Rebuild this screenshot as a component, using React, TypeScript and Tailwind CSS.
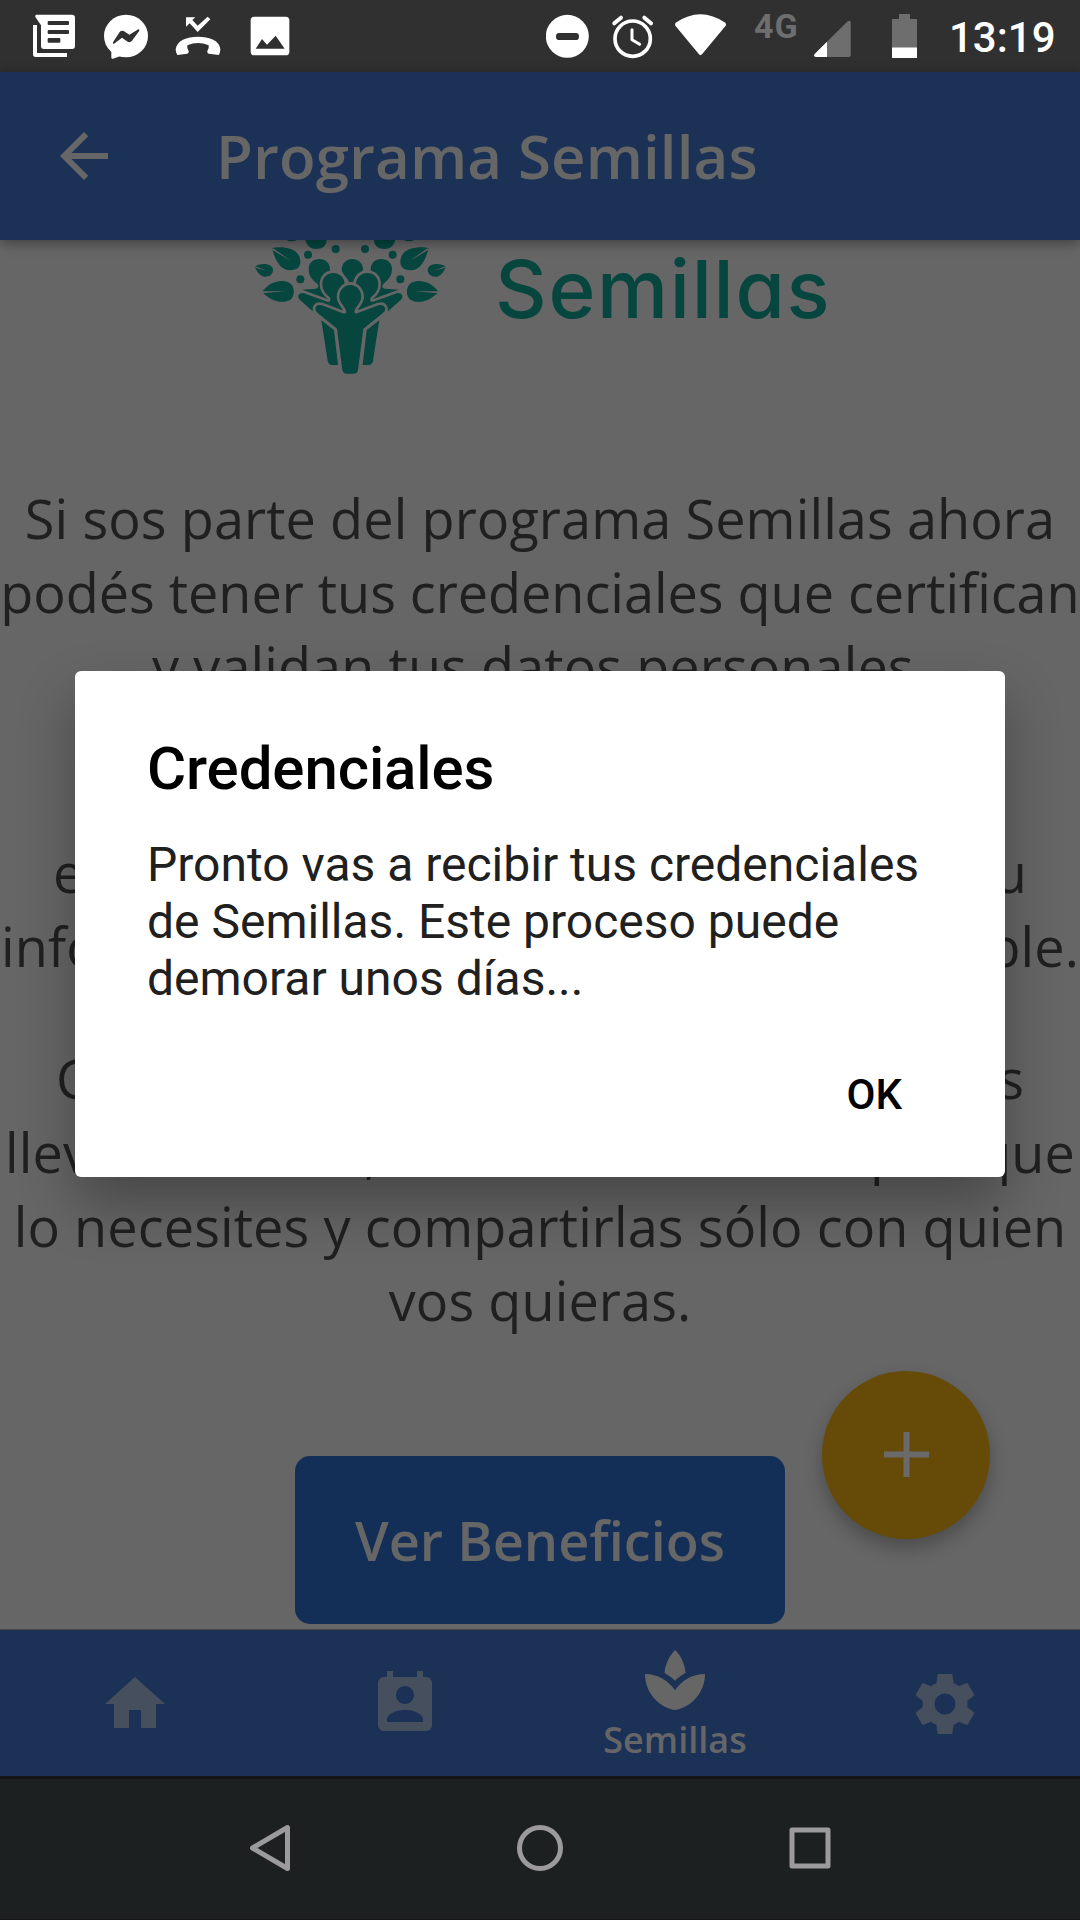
import type { ReactNode } from "react";

function StatusBar() {
  return (
    <div className="flex h-[72px] shrink-0 items-start bg-[#303030] pt-3 pl-8 text-white">
      <svg className="h-12 w-11" viewBox="36 36 132 144" fill="currentColor">
        <path d="M39 75h12v84h90v12H47q-8 0-8-8z" />
        <path d="M49 44H156q9 0 9 9V138q0 9-9 9H72q-9 0-9-9V76L46 51q-2-6 3-7z" />
        <g fill="#303030">
          <rect x="83" y="63" width="64" height="12" rx="3" />
          <rect x="83" y="90" width="64" height="12" rx="3" />
          <rect x="83" y="114" width="38" height="14" rx="3" />
        </g>
      </svg>
      <svg className="ml-[26px] size-12" viewBox="246 36 144 144" fill="currentColor">
        <ellipse cx="318" cy="108" rx="66" ry="64" />
        <path d="M274 140V173q1 4 5 3L308 166z" />
        <path
          fill="#303030"
          d="M279 131q-1-3 1-6L299 96q5-6 12-3L328 104 355 88q4 0 3 4L336 122q-6 7-13 3L306 113 282 131z"
        />
      </svg>
      <svg className="ml-6 size-12" viewBox="462 36 144 144" fill="currentColor">
        <path d="M498 52H526L517 60 533 77 563 50 571 58 533 96 509 70 498 80Z" />
        <path d="M467 148C470 122 500 110 534 110C568 110 600 122 601 148Q601 158 597 165L566 161Q560 158 562 153Q568 145 566 136Q534 122 502 136Q500 145 506 153Q508 158 502 161L472 165Q467 158 467 148Z" />
      </svg>
      <svg className="ml-7 h-12 w-10" viewBox="690 36 120 144" fill="currentColor">
        <rect x="692" y="50" width="116" height="116" rx="11" />
        <path fill="#303030" d="M707 146 726 117 741 134 767 107 794 146Z" />
      </svg>

      <svg className="ml-[256px] h-12 w-11" viewBox="18 36 132 144" fill="currentColor">
        <circle cx="82" cy="109" r="64.5" />
        <rect x="48" y="99" width="69" height="21" rx="10" fill="#303030" />
      </svg>
      <svg
        className="ml-5 h-12 w-11"
        viewBox="210 36 132 144"
        fill="none"
        stroke="currentColor"
        strokeLinecap="round"
        strokeLinejoin="round"
      >
        <circle cx="278" cy="116" r="53" strokeWidth="11" />
        <path d="M223 70 243 53M333 70 313 53" strokeWidth="12" />
        <path d="M276 89V119L299 133" strokeWidth="9" />
      </svg>
      <svg className="ml-5 h-12 w-[53px]" viewBox="402 36 159 144" fill="currentColor">
        <path d="M407 68Q481 17 556 68q4 5 1 9L486 163q-5 5-9 0L406 77q-2-4 1-9z" />
      </svg>
      <span className="ml-[27px] w-[60px] font-['Roboto',sans-serif] text-[34px] leading-[29px] font-bold tracking-[1px] text-[#6e6e6e]">
        4G
      </span>
      <svg className="h-12 w-[37px]" viewBox="822 36 111 144" fill="currentColor">
        <path fill="#6e6e6e" d="M824 162 923 64q9-5 9 3V166q0 5-5 5H828q-7-1-4-9z" />
        <path d="M861 125 824 162q-5 8 4 9H861Z" />
      </svg>
      <svg className="ml-[41px] h-12 w-[25px]" viewBox="0 0 25 48">
        <path fill="#6e6e6e" d="M7 2H18V7H25V36H0V7H7z" />
        <path fill="#fff" d="M0 35.5H25V46H0z" />
      </svg>
      <span className="ml-8 font-['Roboto',sans-serif] text-[42px] leading-[52px] font-medium">
        13:19
      </span>
    </div>
  );
}

function Header() {
  return (
    <header className="relative z-10 flex h-[168px] shrink-0 items-center gap-24 bg-[#1b3256] pl-12 text-[#666] shadow-[0_3px_12px_rgba(0,0,0,0.38)]">
      <svg className="size-[72px]" viewBox="0 0 24 24" fill="currentColor">
        <path d="M20 11H7.83l5.59-5.59L12 4l-8 8 8 8 1.41-1.41L7.83 13H20v-2z" />
      </svg>
      <h1 className="text-[60px] leading-[82px] font-semibold tracking-[0.1px]">Programa Semillas</h1>
    </header>
  );
}

function LeftFoliage() {
  return (
    <g>
      <path d="M96 54C120 49 172 50 180 86C185 110 172 121 150 121C120 120 105 90 96 54Z" />
      <path d="M44 110C60 98 95 98 99 118C100 135 85 142 72 140C58 136 50 124 44 110Z" />
      <path d="M66 186C90 155 120 148 145 157C166 166 166 200 150 210C125 222 95 215 66 186Z" />
      <path d="M196 30C201 48 212 57 228 57C248 57 260 48 260 28Z" />
      <ellipse cx="155" cy="27" rx="16" ry="7" />
      <circle cx="204" cy="74" r="12" />
      <circle cx="287" cy="57" r="12" />
      <circle cx="181" cy="148" r="12" />
      <g fill="#666">
        <path d="M94 58 100 55 152 92Z" />
        <path d="M44 108 46 113 80 122Z" />
        <path d="M64 184 66 190 138 184Z" />
      </g>
    </g>
  );
}

function LeftPeople() {
  return (
    <g>
      <path d="M206 118C206 98 220 87 238 87C258 87 270 100 270 118C270 140 250 150 248 180L268 215L186 179L228 176C236 174 238 168 230 160C214 148 206 135 206 118Z" />
      <path
        className="stroke-[#666] stroke-[16px] [paint-order:stroke]"
        d="M247 162C247 142 262 129 280 129C300 129 314 144 314 162C312 185 297 195 298 210C300 222 310 235 320 240L240 258L213 239L180 210Q173 203 175 196Q182 186 192 190L262 215C272 217 274 208 268 200C254 190 247 178 247 162Z"
      />
      <path d="M244 271 282 300 294 405H277Q265 404 263 392Z" />
    </g>
  );
}

function Logo() {
  return (
    <div className="flex h-[241px] w-full shrink-0 items-start pl-60">
      <svg className="h-[150px] w-[220px]" viewBox="0 30 660 450" fill="#06463f">
        <LeftFoliage />
        <g transform="translate(662 0) scale(-1 1)">
          <LeftFoliage />
        </g>
        <path d="M337 87C358 87 369 103 369 118C366 138 345 140 340 157H327C322 140 308 138 305 118C306 100 318 87 337 87Z" />
        <LeftPeople />
        <g transform="translate(662 0) scale(-1 1)">
          <LeftPeople />
        </g>
        <path
          className="stroke-[#666] stroke-[16px] [paint-order:stroke]"
          d="M331 165C350 165 364 180 364 202C362 222 345 230 343 246Q344 252 352 250L415 226Q432 222 436 236Q437 244 428 250L370 296L354 420Q352 431 342 431H320Q309 431 307 420L291 296L234 250Q225 243 226 234Q230 222 246 226L308 250Q318 252 319 246C317 230 300 222 298 202C298 180 312 165 331 165Z"
        />
      </svg>
      <span className="mt-px ml-[35px] font-['Inter',sans-serif] text-[80px] leading-[96px] font-medium tracking-[1.7px] whitespace-nowrap text-[#06463f] [font-feature-settings:'cv11']">
        Semillas
      </span>
    </div>
  );
}

function Content() {
  return (
    <main className="relative flex flex-1 flex-col items-center overflow-hidden text-[54px] leading-[74px] text-[#202020]">
      <Logo />
      <div className="flex w-full flex-col gap-[58px] text-center tracking-[0.1px] whitespace-nowrap">
        <p className="flex flex-col items-center">
          <span>Si sos parte del programa Semillas ahora</span>
          <span className="tracking-[-0.02px]">podés tener tus credenciales que certifican</span>
          <span>y validan tus datos personales.</span>
        </p>
        <p className="flex flex-col items-center">
          <span>Estas credenciales se guardan</span>
          <span className="w-[974px] [text-align-last:justify]">en tu celular de forma segura y que tu</span>
          <span className="w-[1078px] [text-align-last:justify]">información sea siempre clara y confiable.</span>
        </p>
        <p className="flex flex-col items-center">
          <span className="w-[968px] [text-align-last:justify]">Con esta aplicación podés tenerlas</span>
          <span className="w-[1070px] [text-align-last:justify]">llevar con vos, o mostrarlas siempre que</span>
          <span>lo necesites y compartirlas sólo con quien</span>
          <span>vos quieras.</span>
        </p>
      </div>
      <button className="mt-[119px] h-[168px] w-[490px] shrink-0 rounded-[15px] bg-[#132f58] font-semibold text-[#666]">
        Ver Beneficios
      </button>
      <button className="absolute right-[90px] bottom-[90px] flex size-[168px] items-center justify-center rounded-full bg-[#664b08] pb-px text-[#6a6a6a] shadow-[0_9px_18px_rgba(0,0,0,0.26)]">
        <svg className="size-[45px]" viewBox="0 0 45 45" fill="currentColor">
          <path d="M19.5 0h6v19.5H45v6H25.5V45h-6V25.5H0v-6h19.5z" />
        </svg>
      </button>
    </main>
  );
}

function Tab({ children, label }: { children: ReactNode; label?: string }) {
  return (
    <div className={label ? "flex flex-col items-center pt-[14px] text-[#666]" : "flex flex-col items-center pt-[38px] text-[#464f5d]"}>
      <svg className="size-[72px]" viewBox="0 0 24 24" fill="currentColor">
        {children}
      </svg>
      {label && <span className="-mt-px text-[36px] leading-[49px] font-semibold">{label}</span>}
    </div>
  );
}

function TabBar() {
  return (
    <nav className="grid h-[147px] shrink-0 grid-cols-4 border-t border-[#45484d] bg-[#1b3256]">
      <Tab>
        <path d="M10 20v-6h4v6h5v-8h3L12 3 2 12h3v8z" />
      </Tab>
      <Tab>
        <path d="M19 3h-1V1h-2v2H8V1H6v2H5c-1.11 0-2 .9-2 2v14c0 1.1.89 2 2 2h14c1.1 0 2-.9 2-2V5c0-1.1-.9-2-2-2zm-7 3c1.66 0 3 1.34 3 3s-1.34 3-3 3-3-1.34-3-3 1.34-3 3-3zm6 12H6v-1c0-2 4-3.1 6-3.1s6 1.1 6 3.1v1z" />
      </Tab>
      <Tab label="Semillas">
        <path d="M15.49 9.63c-.18-2.79-1.31-5.51-3.43-7.63-2.14 2.14-3.32 4.86-3.55 7.63 1.28.68 2.46 1.56 3.49 2.63 1.03-1.06 2.21-1.94 3.49-2.63zM12 15.45C9.85 12.17 6.18 10 2 10c0 5.32 3.36 9.82 8.03 11.49.63.23 1.29.4 1.97.51.68-.12 1.33-.29 1.97-.51C18.64 19.82 22 15.32 22 10c-4.18 0-7.85 2.17-10 5.45z" />
      </Tab>
      <Tab>
        <path d="M12,15.5A3.5,3.5 0 0,1 8.5,12A3.5,3.5 0 0,1 12,8.5A3.5,3.5 0 0,1 15.5,12A3.5,3.5 0 0,1 12,15.5M19.43,12.97C19.47,12.65 19.5,12.33 19.5,12C19.5,11.67 19.47,11.34 19.43,11L21.54,9.37C21.73,9.22 21.78,8.95 21.66,8.73L19.66,5.27C19.54,5.05 19.27,4.96 19.05,5.05L16.56,6.05C16.04,5.66 15.5,5.32 14.87,5.07L14.5,2.42C14.46,2.18 14.25,2 14,2H10C9.75,2 9.54,2.18 9.5,2.42L9.13,5.07C8.5,5.32 7.96,5.66 7.44,6.05L4.95,5.05C4.73,4.96 4.46,5.05 4.34,5.27L2.34,8.73C2.21,8.95 2.27,9.22 2.46,9.37L4.57,11C4.53,11.34 4.5,11.67 4.5,12C4.5,12.33 4.53,12.65 4.57,12.97L2.46,14.63C2.27,14.78 2.21,15.05 2.34,15.27L4.34,18.73C4.46,18.95 4.73,19.03 4.95,18.95L7.44,17.94C7.96,18.34 8.5,18.68 9.13,18.93L9.5,21.58C9.54,21.82 9.75,22 10,22H14C14.25,22 14.46,21.82 14.5,21.58L14.87,18.93C15.5,18.67 16.04,18.34 16.56,17.94L19.05,18.95C19.27,19.03 19.54,18.95 19.66,18.73L21.66,15.27C21.78,15.05 21.73,14.78 21.54,14.63L19.43,12.97Z" />
      </Tab>
    </nav>
  );
}

function Dialog() {
  return (
    <div className="absolute inset-0 z-20 flex items-center justify-center">
      <div
        role="dialog"
        className="flex h-[506px] w-[930px] flex-col rounded-[6px] bg-white pt-[63px] pl-[72px] font-['Roboto',sans-serif] shadow-[0_28px_56px_rgba(0,0,0,0.3)]"
      >
        <h2 className="text-[60px] leading-[70px] font-medium tracking-[-0.1px] text-black">Credenciales</h2>
        <p className="mt-8 text-[48px] leading-[57px] text-[#202020]">
          Pronto vas a recibir tus credenciales
          <br />
          de Semillas. Este proceso puede
          <br />
          demorar unos días...
        </p>
        <button className="mt-[63px] mr-[103px] self-end text-[42px] leading-[49px] font-medium text-black">OK</button>
      </div>
    </div>
  );
}

function SystemNav() {
  return (
    <div className="flex h-36 shrink-0 items-center justify-center gap-[222px] border-t-[3px] border-b border-t-[#141416] border-b-[#161617] bg-[#1c2020] pb-[2px]">
      <svg className="size-12" viewBox="0 0 48 48" fill="none" stroke="#9b9b9c" strokeWidth="5" strokeLinejoin="round">
        <path d="M41.5 3.5V44.5L6.5 24Z" />
      </svg>
      <svg className="size-12" viewBox="0 0 48 48" fill="none" stroke="#9b9b9c" strokeWidth="5">
        <circle cx="24" cy="24" r="20.5" />
      </svg>
      <svg className="size-12" viewBox="0 0 48 48" fill="none" stroke="#9b9b9c" strokeWidth="5" strokeLinejoin="round">
        <path d="M6 6H42V42H6Z" />
      </svg>
    </div>
  );
}

export default function App() {
  return (
    <div className="flex h-[1920px] w-[1080px] flex-col overflow-hidden bg-[#666] font-['Open_Sans',sans-serif]">
      <StatusBar />
      <div className="relative flex h-[1704px] flex-col">
        <Header />
        <Content />
        <TabBar />
        <Dialog />
      </div>
      <SystemNav />
    </div>
  );
}
